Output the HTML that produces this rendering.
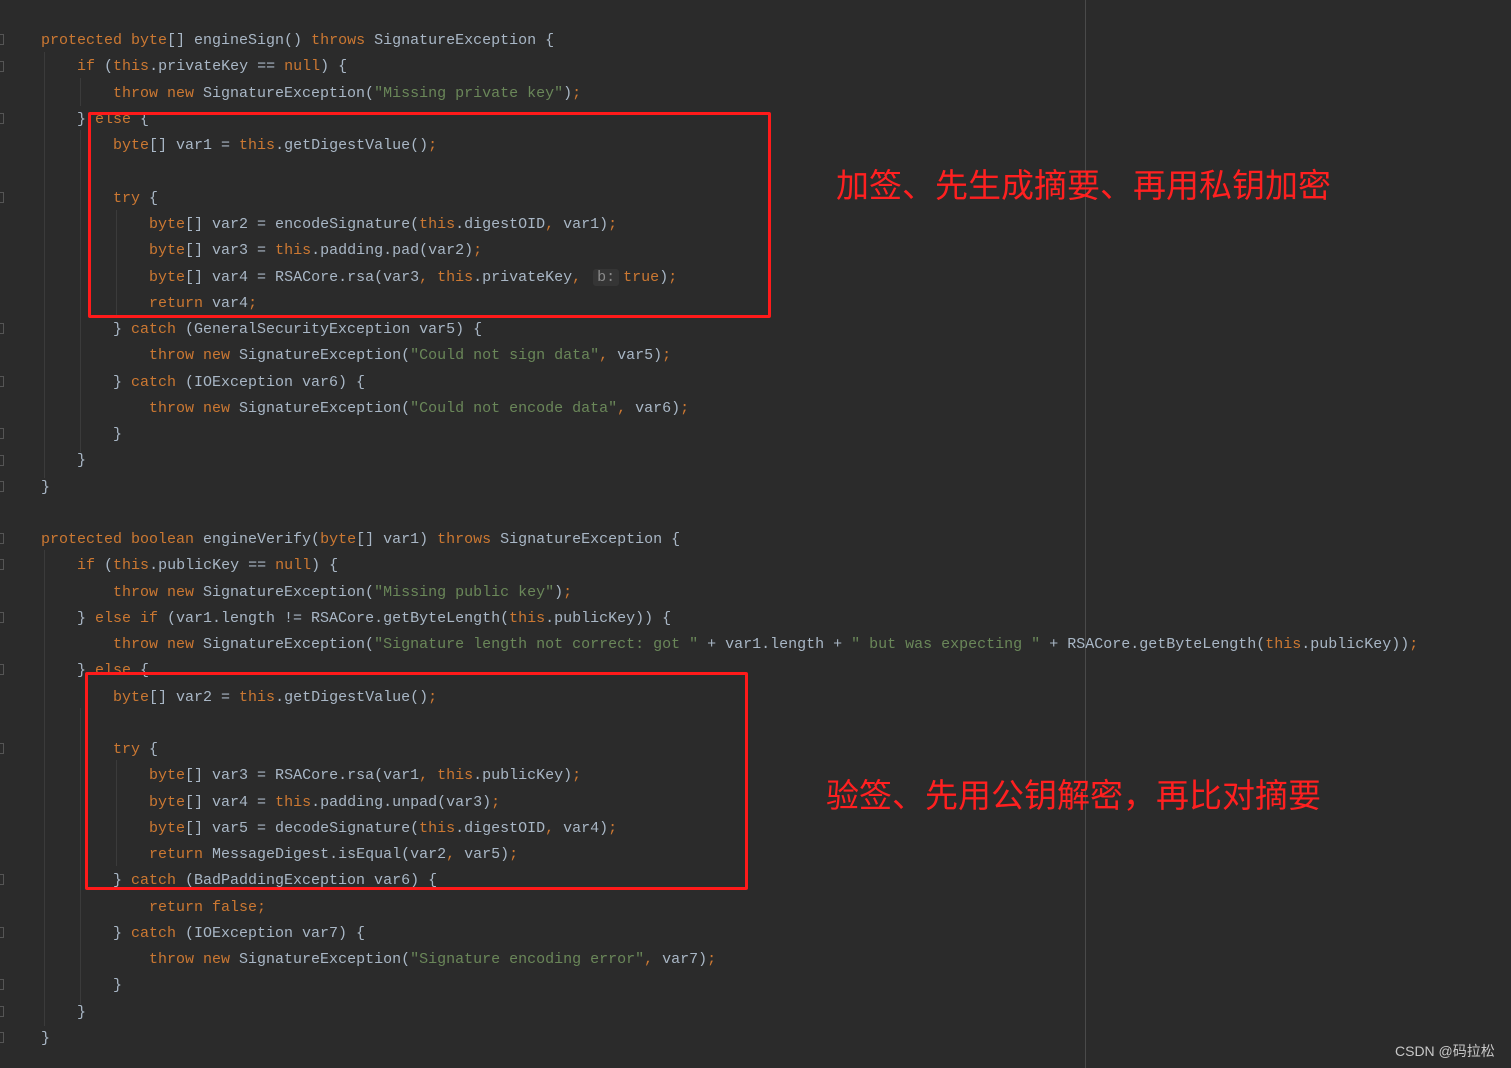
<!DOCTYPE html>
<html><head><meta charset="utf-8"><style>
html,body{margin:0;padding:0}
body{width:1511px;height:1068px;background:#2b2b2b;position:relative;overflow:hidden}
.l{position:absolute;left:41px;margin-top:2px;height:26px;line-height:26px;font-family:"Liberation Mono",monospace;font-size:15px;color:#a9b7c6;white-space:pre}
.k{color:#cc7832}.s{color:#6a8759}
.g{position:absolute;width:1px;background:#3b3b3b}
.box{position:absolute;border:3px solid #ff1a1a;border-radius:2px}
.cn{position:absolute;font-family:"Liberation Sans","Noto Sans CJK SC",sans-serif;font-size:33px;color:#ff2020;white-space:nowrap;line-height:40px}
.hint{background:#353535;color:#8a8a8a;border-radius:3px;padding:0 4px;margin:0 4px 0 3px}
.fm{position:absolute;left:0;width:3px;height:9px;border:1px solid #555;border-left:none}
</style></head><body>
<div class="g" style="left:1085px;top:0;height:1068px;background:#4a4a4a"></div>
<div class="g" style="left:44px;top:52px;height:426px"></div>
<div class="g" style="left:80px;top:78px;height:28px"></div>
<div class="g" style="left:80px;top:130px;height:322px"></div>
<div class="g" style="left:116px;top:210px;height:106px"></div>
<div class="g" style="left:44px;top:550px;height:476px"></div>
<div class="g" style="left:80px;top:708px;height:296px"></div>
<div class="g" style="left:116px;top:760px;height:106px"></div>

<div class="l" style="top:26px"><span class="k">protected byte</span>[] engineSign() <span class="k">throws </span>SignatureException {</div>
<div class="l" style="top:52px">    <span class="k">if </span>(<span class="k">this</span>.privateKey == <span class="k">null</span>) {</div>
<div class="l" style="top:79px">        <span class="k">throw new </span>SignatureException(<span class="s">"Missing private key"</span>)<span class="k">;</span></div>
<div class="l" style="top:105px">    } <span class="k">else </span>{</div>
<div class="l" style="top:131px">        <span class="k">byte</span>[] var1 = <span class="k">this</span>.getDigestValue()<span class="k">;</span></div>
<div class="l" style="top:184px">        <span class="k">try </span>{</div>
<div class="l" style="top:210px">            <span class="k">byte</span>[] var2 = encodeSignature(<span class="k">this</span>.digestOID<span class="k">, </span>var1)<span class="k">;</span></div>
<div class="l" style="top:236px">            <span class="k">byte</span>[] var3 = <span class="k">this</span>.padding.pad(var2)<span class="k">;</span></div>
<div class="l" style="top:263px">            <span class="k">byte</span>[] var4 = RSACore.rsa(var3<span class="k">, this</span>.privateKey<span class="k">, </span><span class="hint">b:</span><span class="k">true</span>)<span class="k">;</span></div>
<div class="l" style="top:289px">            <span class="k">return </span>var4<span class="k">;</span></div>
<div class="l" style="top:315px">        } <span class="k">catch </span>(GeneralSecurityException var5) {</div>
<div class="l" style="top:341px">            <span class="k">throw new </span>SignatureException(<span class="s">"Could not sign data"</span><span class="k">, </span>var5)<span class="k">;</span></div>
<div class="l" style="top:368px">        } <span class="k">catch </span>(IOException var6) {</div>
<div class="l" style="top:394px">            <span class="k">throw new </span>SignatureException(<span class="s">"Could not encode data"</span><span class="k">, </span>var6)<span class="k">;</span></div>
<div class="l" style="top:420px">        }</div>
<div class="l" style="top:446px">    }</div>
<div class="l" style="top:473px">}</div>

<div class="l" style="top:525px"><span class="k">protected boolean </span>engineVerify(<span class="k">byte</span>[] var1) <span class="k">throws </span>SignatureException {</div>
<div class="l" style="top:551px">    <span class="k">if </span>(<span class="k">this</span>.publicKey == <span class="k">null</span>) {</div>
<div class="l" style="top:578px">        <span class="k">throw new </span>SignatureException(<span class="s">"Missing public key"</span>)<span class="k">;</span></div>
<div class="l" style="top:604px">    } <span class="k">else if </span>(var1.length != RSACore.getByteLength(<span class="k">this</span>.publicKey)) {</div>
<div class="l" style="top:630px">        <span class="k">throw new </span>SignatureException(<span class="s">"Signature length not correct: got "</span> + var1.length + <span class="s">" but was expecting "</span> + RSACore.getByteLength(<span class="k">this</span>.publicKey))<span class="k">;</span></div>
<div class="l" style="top:656px">    } <span class="k">else </span>{</div>
<div class="l" style="top:683px">        <span class="k">byte</span>[] var2 = <span class="k">this</span>.getDigestValue()<span class="k">;</span></div>
<div class="l" style="top:735px">        <span class="k">try </span>{</div>
<div class="l" style="top:761px">            <span class="k">byte</span>[] var3 = RSACore.rsa(var1<span class="k">, this</span>.publicKey)<span class="k">;</span></div>
<div class="l" style="top:788px">            <span class="k">byte</span>[] var4 = <span class="k">this</span>.padding.unpad(var3)<span class="k">;</span></div>
<div class="l" style="top:814px">            <span class="k">byte</span>[] var5 = decodeSignature(<span class="k">this</span>.digestOID<span class="k">, </span>var4)<span class="k">;</span></div>
<div class="l" style="top:840px">            <span class="k">return </span>MessageDigest.isEqual(var2<span class="k">, </span>var5)<span class="k">;</span></div>
<div class="l" style="top:866px">        } <span class="k">catch </span>(BadPaddingException var6) {</div>
<div class="l" style="top:893px">            <span class="k">return false;</span></div>
<div class="l" style="top:919px">        } <span class="k">catch </span>(IOException var7) {</div>
<div class="l" style="top:945px">            <span class="k">throw new </span>SignatureException(<span class="s">"Signature encoding error"</span><span class="k">, </span>var7)<span class="k">;</span></div>
<div class="l" style="top:971px">        }</div>
<div class="l" style="top:998px">    }</div>
<div class="l" style="top:1024px">}</div>

<div class="fm" style="top:34px"></div><div class="fm" style="top:61px"></div><div class="fm" style="top:113px"></div>
<div class="fm" style="top:192px"></div><div class="fm" style="top:323px"></div><div class="fm" style="top:376px"></div>
<div class="fm" style="top:428px"></div><div class="fm" style="top:455px"></div><div class="fm" style="top:481px"></div>
<div class="fm" style="top:533px"></div><div class="fm" style="top:559px"></div><div class="fm" style="top:612px"></div>
<div class="fm" style="top:664px"></div><div class="fm" style="top:743px"></div><div class="fm" style="top:874px"></div>
<div class="fm" style="top:927px"></div><div class="fm" style="top:979px"></div><div class="fm" style="top:1006px"></div><div class="fm" style="top:1032px"></div>

<div class="box" style="left:88px;top:112px;width:677px;height:200px"></div>
<div class="box" style="left:85px;top:672px;width:657px;height:212px"></div>
<div class="cn" style="left:836px;top:166px">加签、先生成摘要、再用私钥加密</div>
<div class="cn" style="left:826px;top:776px">验签、先用公钥解密，再比对摘要</div>
<div style="position:absolute;left:1395px;top:1041px;font-family:'Liberation Sans','Noto Sans CJK SC',sans-serif;font-size:14px;color:#c8c8c8">CSDN @码拉松</div>
</body></html>
